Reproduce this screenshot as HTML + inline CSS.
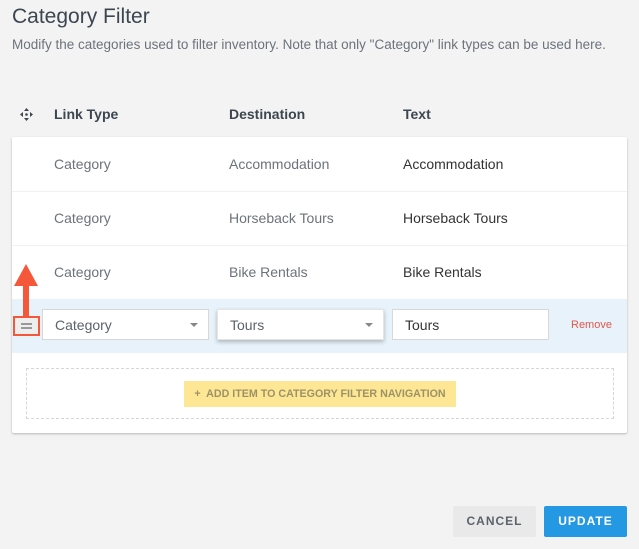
<!DOCTYPE html>
<html><head><style>
body{margin:0;width:639px;height:549px;background:#f3f3f3;font-family:"Liberation Sans",sans-serif;position:relative;overflow:hidden;color:#333}
.a{position:absolute}
h1{position:absolute;left:12px;top:5px;margin:0;font-weight:normal;font-size:21px;color:#3c4650}
.sub{left:12px;top:37px;font-size:13.5px;color:#6b737b;white-space:nowrap}
.th{top:106px;font-size:14px;font-weight:bold;color:#3c4650}
.card{left:12px;top:137px;width:615px;height:296px;background:#fff;box-shadow:0 1px 2px rgba(0,0,0,.25);border-radius:2px}
.row{left:0;width:615px;height:54px;border-bottom:1px solid #f1f1f1}
.c{position:absolute;top:19px;font-size:14px;color:#6b737b}
.t{color:#333}
.sel{position:absolute;top:10px;height:31px;background:#fff;border:1px solid #d8d8d8;box-sizing:border-box;font-size:14px;color:#5b636b;padding:7px 12px}
.car{position:absolute;right:10px;top:13px;border:4px solid transparent;border-top:4px solid #888;border-bottom:0}
.btn{top:506px;height:31px;font-size:12px;font-weight:bold;letter-spacing:1px;text-align:center;line-height:31px;border-radius:2px}
</style></head><body>
<h1>Category Filter</h1>
<div class="a sub">Modify the categories used to filter inventory. Note that only "Category" link types can be used here.</div>
<svg class="a" style="left:20px;top:108px" width="13" height="13" viewBox="0 0 13 13" fill="#3c4650"><path d="M6.5 0L9 3H4ZM6.5 13L9 10H4ZM0 6.5L3 4V9ZM13 6.5L10 4V9Z"/><circle cx="6.5" cy="6.5" r="1.3"/></svg>
<div class="a th" style="left:54px">Link Type</div>
<div class="a th" style="left:229px">Destination</div>
<div class="a th" style="left:403px">Text</div>
<div class="a card">
 <div class="a row" style="top:0"><span class="c" style="left:42px">Category</span><span class="c" style="left:217px">Accommodation</span><span class="c t" style="left:391px">Accommodation</span></div>
 <div class="a row" style="top:54px"><span class="c" style="left:42px">Category</span><span class="c" style="left:217px">Horseback Tours</span><span class="c t" style="left:391px">Horseback Tours</span></div>
 <div class="a row" style="top:108px"><span class="c" style="left:42px">Category</span><span class="c" style="left:217px">Bike Rentals</span><span class="c t" style="left:391px">Bike Rentals</span></div>
 <div class="a row" style="top:162px;background:#e8f2fa;border:0">
  <div class="sel" style="left:30px;width:167px">Category<span class="car"></span></div>
  <div class="sel" style="left:205px;width:167px;border-color:#e4e4e4;box-shadow:0 2px 4px rgba(0,0,0,.25)">Tours<span class="car"></span></div>
  <div class="sel" style="left:380px;width:157px;color:#333">Tours</div>
  <span class="c" style="left:559px;top:20px;font-size:11px;color:#e0584a">Remove</span>
 </div>
 <div class="a" style="left:14px;top:231px;width:586px;height:49px;border:1px dashed #d6d6d6"></div>
 <div class="a" style="left:172px;top:244px;width:272px;height:26px;background:#fde794;font-size:10.7px;font-weight:bold;color:#9c9266;line-height:26px;text-align:center;white-space:nowrap">+&nbsp; ADD ITEM TO CATEGORY FILTER NAVIGATION</div>
</div>
<div class="a" style="left:13px;top:316px;width:27px;height:20px;border:2px solid #f5573a;box-sizing:border-box;background:#eee"></div>
<div class="a" style="left:21px;top:323px;width:11px;height:1.5px;background:#999"></div>
<div class="a" style="left:21px;top:327px;width:11px;height:1.5px;background:#999"></div>
<div class="a" style="left:23px;top:285px;width:6px;height:31px;background:#f5573a"></div>
<svg class="a" style="left:14px;top:264px" width="24" height="22"><path d="M12 0L24 22H0Z" fill="#f5573a"/></svg>
<div class="a btn" style="left:453px;width:83px;background:#e9e9e9;color:#5b636b">CANCEL</div>
<div class="a btn" style="left:544px;width:83px;background:#2598e3;color:#fff">UPDATE</div>
</body></html>
